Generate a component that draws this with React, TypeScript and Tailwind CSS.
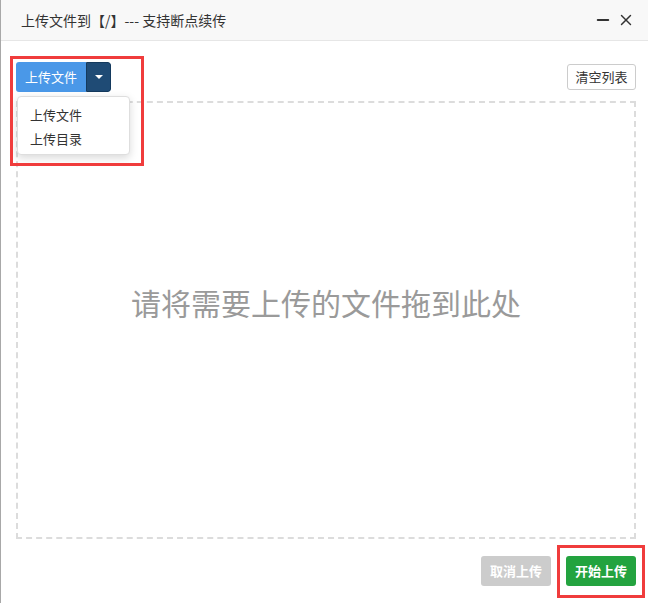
import { X, Minus } from "lucide-react";

const font = { fontFamily: '"Microsoft YaHei", "Noto Sans CJK SC", "Noto Sans", sans-serif' };

export default function App() {
  return (
    <div className="relative w-[648px] h-[603px] bg-white border-l border-[#a8a8a8] overflow-hidden text-[#333]" style={font}>
      {/* title bar */}
      <div className="h-[41px] bg-[#f8f8f8] border-b border-[#e6e6e6] flex items-center justify-between pl-[20px] pr-[13px]">
        <span className="text-[14px] leading-[20px]">上传文件到【/】--- 支持断点续传</span>
        <div className="flex items-center gap-[5px] text-[#333]">
          <Minus size={18} strokeWidth={2.6} />
          <X size={18} strokeWidth={1.9} />
        </div>
      </div>

      <div className="pl-[15px] pr-[12px]">
        {/* toolbar */}
        <div className="flex justify-between items-start pt-[21px]">
          <div className="flex h-[30px] rounded-[3px] overflow-hidden">
            <button className="w-[70px] bg-[#4a98e8] text-white text-[13px] leading-[30px]">上传文件</button>
            <button className="w-[25px] bg-[#1f4b75] border border-[#143a5e] rounded-r-[3px] flex items-center justify-center">
              <span className="w-0 h-0 border-l-[4px] border-r-[4px] border-t-[4px] border-l-transparent border-r-transparent border-t-white" />
            </button>
          </div>
          <button className="mt-[2px] h-[26px] w-[69px] border border-[#ccc] rounded-[3px] text-[13px] leading-[24px] bg-white">清空列表</button>
        </div>

        {/* drop zone */}
        <div className="mt-[9px] h-[438px] border-2 border-dashed border-[#dcdcdc] flex items-center justify-center pb-[36px]">
          <span className="text-[30px] leading-[40px] text-[#9a9a9a]">请将需要上传的文件拖到此处</span>
        </div>

        {/* actions */}
        <div className="mt-[17px] flex justify-end gap-[15px]">
          <button className="h-[30px] w-[70px] rounded-[3px] bg-[#cccccc] text-white text-[13px] font-bold">取消上传</button>
          <button className="h-[30px] w-[70px] rounded-[3px] bg-[#23a33f] text-white text-[13px] font-bold">开始上传</button>
        </div>
      </div>

      {/* dropdown menu */}
      <div className="absolute left-[16px] top-[96px] w-[113px] h-[59px] bg-white border border-[#dedede] rounded-[4px] shadow-[0_3px_8px_rgba(0,0,0,0.15)] pt-[6px] text-[13px]">
        <div className="pl-[12px] leading-[24px]">上传文件</div>
        <div className="pl-[12px] leading-[24px]">上传目录</div>
      </div>

      {/* red annotation boxes */}
      <div className="absolute left-[9px] top-[56px] w-[134px] h-[110px] border-[3px] border-[#f03c3c] pointer-events-none" />
      <div className="absolute left-[556px] top-[545px] w-[88px] h-[53px] border-[3px] border-[#f03c3c] pointer-events-none" />
    </div>
  );
}
